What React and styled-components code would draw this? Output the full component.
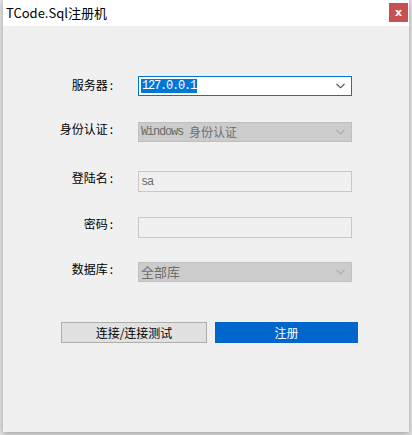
import React from "react";
import styled, { createGlobalStyle } from "styled-components";

const Global = createGlobalStyle`
  html, body { margin: 0; padding: 0; }
  body {
    background: #e2e2e2;
    width: 412px;
    height: 435px;
    overflow: hidden;
    font-family: "Noto Sans CJK SC", "Noto Sans", sans-serif;
  }
`;

const Window = styled.div`
  margin-left: 3px;
  width: 406px;
  height: 432px;
  background: #f0f0f0;
  box-shadow: 0 2px 6px rgba(0, 0, 0, 0.28);
  display: flex;
  flex-direction: column;
  box-sizing: border-box;
`;

const TitleBar = styled.div`
  height: 26px;
  background: #ffffff;
  display: flex;
  align-items: center;
  padding-left: 3px;
  flex-shrink: 0;
`;

const Title = styled.span`
  font-size: 13px;
  color: #000;
  line-height: 1;
  margin-top: -2px;
`;

const CloseButton = styled.div`
  margin-left: auto;
  margin-right: 1px;
  width: 19px;
  height: 19px;
  background: #c75050;
  display: flex;
  align-items: center;
  justify-content: center;
  align-self: flex-start;
  margin-top: 3px;
  color: #fff;
  font-family: "DejaVu Sans", sans-serif;
  font-weight: bold;
  font-size: 11px;
  line-height: 1;
`;

const Form = styled.div`
  padding-top: 50px;
  padding-left: 3px;
  display: flex;
  flex-direction: column;
`;

const Row = styled.div`
  display: grid;
  grid-template-columns: 107px 214px;
  column-gap: 25px;
  align-items: start;
  margin-top: ${(p) => p.$gap || 0}px;
`;

const Label = styled.div`
  text-align: right;
  font-size: 12px;
  line-height: 12px;
  color: #000;
  padding-top: ${(p) => p.$pt || 1}px;
  white-space: nowrap;
`;

const Colon = styled.span`
  margin-left: 2px;
`;

const Field = styled.div`
  box-sizing: border-box;
  height: ${(p) => p.$h || 21}px;
  border: 1px solid ${(p) => (p.$active ? "#0078d7" : p.$combo ? "#bfbfbf" : "#c8c8c8")};
  background: ${(p) => (p.$active ? "#ffffff" : p.$combo ? "#cccccc" : "#f0f0f0")};
  display: flex;
  align-items: center;
  padding-left: 2px;
  padding-right: 6px;
  color: ${(p) => (p.$active ? "#000" : "#6d6d6d")};
`;

const MonoText = styled.span`
  font-family: "Liberation Mono", "Noto Sans CJK SC", monospace;
  font-size: 12px;
  letter-spacing: -1.2px;
  line-height: 14px;
  white-space: pre;
`;

const CjkText = styled.span`
  font-family: "Noto Sans CJK SC", sans-serif;
  font-size: 12px;
  letter-spacing: 0;
  line-height: 14px;
`;

const SansText = styled.span`
  font-family: "Noto Sans CJK SC", sans-serif;
  font-size: 13px;
  line-height: 14px;
`;

const Selected = styled.span`
  background: #0078d7;
  color: #fff;
  padding: 0 1px;
`;

const Chevron = styled.svg`
  margin-left: auto;
  flex-shrink: 0;
`;

const ButtonRow = styled.div`
  display: flex;
  gap: 8px;
  margin-top: 40px;
  padding-left: 55px;
`;

const Button = styled.div`
  box-sizing: border-box;
  width: ${(p) => p.$w}px;
  height: 21px;
  display: flex;
  align-items: center;
  justify-content: center;
  font-size: 12px;
  line-height: 1;
  background: ${(p) => (p.$primary ? "#0066cc" : "#e1e1e1")};
  border: 1px solid ${(p) => (p.$primary ? "#0066cc" : "#adadad")};
  color: ${(p) => (p.$primary ? "#fff" : "#000")};
`;

const Arrow = ({ color }) => (
  <Chevron width="9" height="6" viewBox="0 0 9 6">
    <polyline points="0.5,0.8 4.5,4.8 8.5,0.8" fill="none" stroke={color} strokeWidth="1.1" />
  </Chevron>
);

export default function App() {
  return (
    <>
      <Global />
      <Window>
        <TitleBar>
          <Title>TCode.Sql注册机</Title>
          <CloseButton>x</CloseButton>
        </TitleBar>
        <Form>
          <Row>
            <Label $pt={3}>服务器<Colon>:</Colon></Label>
            <Field $active $combo $h={20}>
              <MonoText>
                <Selected>127.0.0.1</Selected>
              </MonoText>
              <Arrow color="#404040" />
            </Field>
          </Row>
          <Row $gap={26}>
            <Label>身份认证<Colon>:</Colon></Label>
            <Field $combo $h={20}>
              <MonoText>Windows </MonoText>
              <CjkText>身份认证</CjkText>
              <Arrow color="#a8a8a8" />
            </Field>
          </Row>
          <Row $gap={29}>
            <Label>登陆名<Colon>:</Colon></Label>
            <Field>
              <MonoText>sa</MonoText>
            </Field>
          </Row>
          <Row $gap={25}>
            <Label>密码<Colon>:</Colon></Label>
            <Field />
          </Row>
          <Row $gap={24}>
            <Label>数据库<Colon>:</Colon></Label>
            <Field $combo $h={20}>
              <SansText>全部库</SansText>
              <Arrow color="#a8a8a8" />
            </Field>
          </Row>
          <ButtonRow>
            <Button $w={146}>连接/连接测试</Button>
            <Button $w={143} $primary>注册</Button>
          </ButtonRow>
        </Form>
      </Window>
    </>
  );
}
